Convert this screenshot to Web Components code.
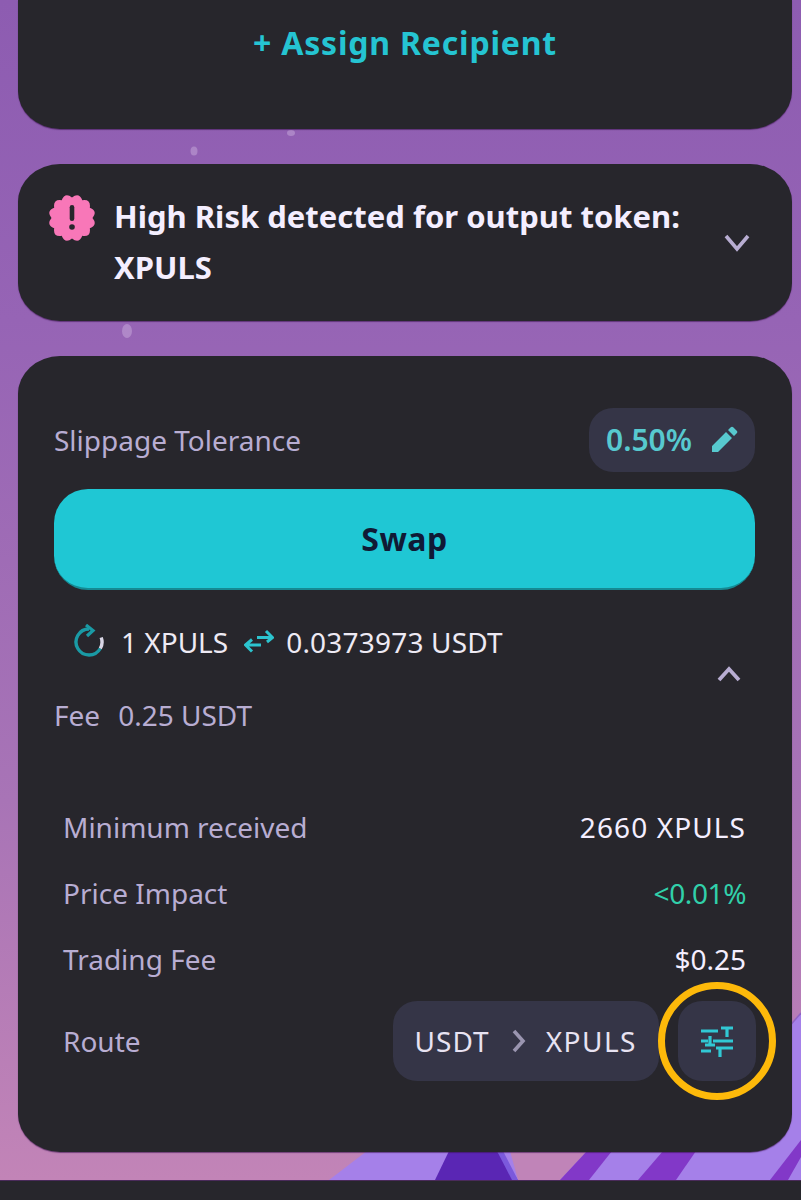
<!DOCTYPE html>
<html lang="en">
<head>
<meta charset="utf-8">
<title>Swap</title>
<style>
    html, body { margin: 0; padding: 0; }
    body {
        width: 801px;
        height: 1200px;
        overflow: hidden;
        font-family: "Noto Sans", "Open Sans", sans-serif;
    }
</style>
</head>
<body>
<swap-page>
    <assign-card></assign-card>
    <risk-card>High Risk detected for output token: XPULS</risk-card>
    <swap-card></swap-card>
</swap-page>
<bottom-bar></bottom-bar>

<script>
const icons = {
    chevronDown: '<svg width="28" height="20" viewBox="0 0 28 20"><path d="M3 3l11 13L25 3" fill="none" stroke="currentColor" stroke-width="3.6"/></svg>',
    chevronUp: '<svg width="28" height="20" viewBox="0 0 28 20"><path d="M4 17L14 6l10 11" fill="none" stroke="currentColor" stroke-width="3.8"/></svg>',
    chevronRight: '<svg width="14" height="24" viewBox="0 0 14 24" style="margin:0 20px 0 22px;flex:none"><path d="M2 2l9 10-9 10" fill="none" stroke="#9a95b0" stroke-width="3.6"/></svg>',
    pencil: '<svg width="28" height="28" viewBox="0 0 28 28"><path fill="currentColor" d="M2 26v-6L16 6l6 6L8 26zM18 4l2.500-2.500a2 2 0 0 1 3 0l3 3a2 2 0 0 1 0 3L24 10z"/></svg>',
    refresh: '<svg width="32" height="36" viewBox="0 0 32 36"><path d="M16 5A13 13 0 1 0 27.300 24.500" fill="none" stroke="#1a9aa5" stroke-width="3.400"/><path d="M28.200 13.500A13 13 0 0 1 27.300 24.500" fill="none" stroke="#d9d6e6" stroke-width="3.400"/><path d="M13 1l7 5.500-6 5.500" fill="none" stroke="#1a9aa5" stroke-width="3.200"/></svg>',
    swapArrows: '<svg width="30" height="28" viewBox="0 0 30 28"><g fill="none" stroke="#2cc4cf" stroke-width="3"><path d="M13 9.500h15M22 3l6.500 6.500L23 14"/><path d="M17 17H2M8 11.500 1.500 17 8 23.500"/></g></svg>',
    sliders: '<svg width="34" height="32" viewBox="0 0 34 32"><g fill="none" stroke="#31c8d4" stroke-width="3.200"><path d="M1 6h17M21 3h12M27 3v9"/><path d="M1 16h7M13 16h20M10 11v9M5 20h10" /><path d="M1 26h10M16 23h17M20 23v9"/></g></svg>'
};

// scalloped badge outline, 12 lobes
function scallopPath (cx, cy, outer, inner, lobes) {
    let d = '';
    for (let i = 0; i < lobes; i++) {
        const a0 = (i / lobes) * Math.PI * 2 - Math.PI / 2;
        const a1 = ((i + 0.5) / lobes) * Math.PI * 2 - Math.PI / 2;
        const a2 = ((i + 1) / lobes) * Math.PI * 2 - Math.PI / 2;
        if (i === 0) {
            d += `M${(cx + inner * Math.cos(a0)).toFixed(1)} ${(cy + inner * Math.sin(a0)).toFixed(1)}`;
        }
        d += `Q${(cx + outer * Math.cos(a1)).toFixed(1)} ${(cy + outer * Math.sin(a1)).toFixed(1)} ${(cx + inner * Math.cos(a2)).toFixed(1)} ${(cy + inner * Math.sin(a2)).toFixed(1)}`;
    }
    return d + 'z';
}

class SwapPage extends HTMLElement {
    constructor () {
        super();
        this.attachShadow({ mode: 'open' });
        this.shadowRoot.innerHTML = `
        <style>
            :host {
                display: flex;
                flex-direction: column;
                gap: 35px;
                box-sizing: border-box;
                height: 1180px;
                padding: 0 9px 0 18px;
                position: relative;
                overflow: hidden;
                background: linear-gradient(180deg, #8d5cb1 0%, #9664b5 320px, #a874b6 800px, #c284b7 1180px);
            }
            svg.bg { position: absolute; left: 0; top: 0; }
            ::slotted(*) { position: relative; }
        </style>
        <svg class="bg" width="801" height="1180" viewBox="0 0 801 1180">
            <g fill="#eadcf5" opacity="0.3">
                <ellipse cx="194" cy="151" rx="3.500" ry="4.500"/>
                <ellipse cx="127" cy="331" rx="5" ry="7"/>
                <ellipse cx="291" cy="133" rx="4" ry="3"/>
            </g>
            <path fill="#a580e9" d="M329 1180l38-29 30-20h404v49z"/>
            <path fill="#a580e9" d="M700 1131l101-118v167H700z"/>
            <path fill="none" stroke="#8f62c4" stroke-width="1.500" d="M780 1037l21-24"/>
            <path fill="#5a26b4" d="M435 1180l14-29h48l21 29z"/>
            <path fill="#7b59dc" d="M497 1151h6l15 29h-6z"/>
            <path fill="#c084b8" d="M510 1151h77l-27 29h-42z"/>
            <path fill="#8238c8" d="M587 1151h25l-23 29h-29z"/>
            <path fill="#8238c8" d="M663 1151h33l-20 29h-38z"/>
            <path fill="#8238c8" d="M770 1180l31-40v17l-13 23z"/>
        </svg>
        <slot></slot>`;
    }
}

class AssignCard extends HTMLElement {
    constructor () {
        super();
        this.attachShadow({ mode: 'open' });
        this.shadowRoot.innerHTML = `
        <style>
            :host {
                display: flex;
                justify-content: center;
                box-sizing: border-box;
                height: 129px;
                padding-top: 23px;
                background: #27262c;
                border-radius: 0 0 42px 42px / 0 0 38px 38px;
                box-shadow: 0 1px 1px rgba(60, 20, 80, 0.6);
                color: #25c4d2;
                font-size: 32px;
                letter-spacing: 0.8px;
                line-height: 40px;
                font-weight: 700;
            }
        </style>
        <span>+ Assign Recipient</span>`;
    }
}

class RiskCard extends HTMLElement {
    constructor () {
        super();
        this.attachShadow({ mode: 'open' });
        this.shadowRoot.innerHTML = `
        <style>
            :host {
                display: flex;
                align-items: flex-start;
                box-sizing: border-box;
                height: 157px;
                padding: 27px 41px 0 30px;
                background: #27262c;
                border-radius: 42px / 38px;
                box-shadow: 0 1px 1px rgba(60, 20, 80, 0.6);
                color: #f4eeff;
                font-size: 31px;
                line-height: 51px;
                font-weight: 700;
            }
            .badge { flex: none; width: 48px; height: 48px; margin-top: 3px; margin-right: 18px; }
            .text { flex: 1; width: 0; }
            .chevron { flex: none; margin-top: 42px; color: #b8add2; display: flex; }
        </style>
        <svg class="badge" viewBox="0 0 48 48">
            <path fill="#f877b8" d="${scallopPath(24, 24, 27, 20.5, 12)}"/>
            <rect x="21.700" y="11" width="4.600" height="16" rx="2.300" fill="#27262c"/>
            <circle cx="24" cy="33" r="2.800" fill="#27262c"/>
        </svg>
        <span class="text"><slot></slot></span>
        <span class="chevron">${icons.chevronDown}</span>`;
    }
}

class StatRow extends HTMLElement {
    constructor () {
        super();
        this.attachShadow({ mode: 'open' });
    }
    connectedCallback () {
        const color = this.getAttribute('color') || '#f4eeff';
        const spacing = this.getAttribute('spacing') || '0';
        this.shadowRoot.innerHTML = `
        <style>
            :host {
                display: flex;
                justify-content: space-between;
                height: 66px;
                align-items: center;
                padding: 0 9px;
                font-size: 28px;
                color: #b8add2;
            }
            .value { color: ${color}; letter-spacing: ${spacing}; }
        </style>
        <span>${this.getAttribute('label')}</span>
        <span class="value">${this.getAttribute('value')}</span>`;
    }
}

class SwapCard extends HTMLElement {
    constructor () {
        super();
        this.attachShadow({ mode: 'open' });
        this.shadowRoot.innerHTML = `
        <style>
            :host {
                display: flex;
                flex-direction: column;
                box-sizing: border-box;
                height: 796px;
                padding: 51px 37px 0 36px;
                background: #27262c;
                border-radius: 42px / 38px;
                box-shadow: 0 1px 1px rgba(60, 20, 80, 0.6);
                font-size: 28px;
                color: #b8add2;
            }
            .slippage { display: flex; justify-content: space-between; align-items: center; height: 65px; }
            .chip {
                display: flex; align-items: center; gap: 18px;
                height: 64px; box-sizing: border-box; padding: 0 17px;
                background: #353547; border-radius: 24px;
                color: #57c9cf; font-weight: 600; font-size: 30px;
            }
            .swap {
                display: flex; align-items: center; justify-content: center;
                height: 101px; margin-top: 17px;
                background: #1fc7d4; border-radius: 34px;
                border-bottom: 2px solid #158a93; box-sizing: border-box;
                color: #101a35; font-weight: 700; font-size: 32px; letter-spacing: 0.5px;
            }
            .rate {
                display: flex; align-items: center; height: 60px; margin-top: 22px;
                padding-left: 19px; color: #eeeaf4;
            }
            .rate svg { flex: none; }
            .fee { display: flex; justify-content: space-between; align-items: flex-start; height: 100px; }
            .fee-text { display: flex; gap: 18px; margin-top: 24px; }
            .toggle { color: #b8add2; margin-right: 12px; margin-top: -9px; display: flex; }
            .stats { display: flex; flex-direction: column; margin-top: 22px; }
            .route { display: flex; align-items: center; height: 80px; padding-left: 9px; margin-top: 9px; margin-right: -1px; }
            .route-label { flex: 1; }
            .path {
                display: flex; align-items: center;
                height: 80px; box-sizing: border-box; padding: 0 22px;
                background: #353547; border-radius: 24px; color: #e8e3f2;
                letter-spacing: 1.5px;
            }
            .path .first { letter-spacing: 1px; }
            .settings {
                position: relative;
                display: flex; align-items: center; justify-content: center;
                width: 78px; height: 80px; margin-left: 19px;
                background: #353547; border-radius: 24px;
            }
            .ring {
                position: absolute; left: -20px; top: -19px;
                width: 118px; height: 118px; box-sizing: border-box;
                border: 7px solid #fdb90a; border-radius: 50%;
            }
        </style>
        <div class="slippage">
            <span>Slippage Tolerance</span>
            <span class="chip">0.50% ${icons.pencil}</span>
        </div>
        <div class="swap">Swap</div>
        <div class="rate">
            ${icons.refresh}
            <span style="margin-left:16px">1 XPULS</span>
            <span style="margin:0 12px 0 16px;display:flex">${icons.swapArrows}</span>
            <span style="letter-spacing:0.2px">0.0373973 USDT</span>
        </div>
        <div class="fee">
            <span class="fee-text"><span>Fee</span><span>0.25 USDT</span></span>
            <span class="toggle">${icons.chevronUp}</span>
        </div>
        <div class="stats">
            <stat-row label="Minimum received" value="2660 XPULS" spacing="1.1px"></stat-row>
            <stat-row label="Price Impact" value="&lt;0.01%" color="#31d0aa" spacing="-0.4px"></stat-row>
            <stat-row label="Trading Fee" value="$0.25"></stat-row>
        </div>
        <div class="route">
            <span class="route-label">Route</span>
            <span class="path"><span class="first">USDT</span>${icons.chevronRight}<span>XPULS</span></span>
            <span class="settings"><span class="ring"></span>${icons.sliders}</span>
        </div>`;
    }
}

class BottomBar extends HTMLElement {
    constructor () {
        super();
        this.attachShadow({ mode: 'open' });
        this.shadowRoot.innerHTML = `
        <style>
            :host { display: block; height: 20px; background: #27262c; border-top: 1px solid #4a2a5a; box-sizing: border-box; }
        </style>`;
    }
}

customElements.define('swap-page', SwapPage);
customElements.define('assign-card', AssignCard);
customElements.define('risk-card', RiskCard);
customElements.define('stat-row', StatRow);
customElements.define('swap-card', SwapCard);
customElements.define('bottom-bar', BottomBar);
</script>
</body>
</html>
